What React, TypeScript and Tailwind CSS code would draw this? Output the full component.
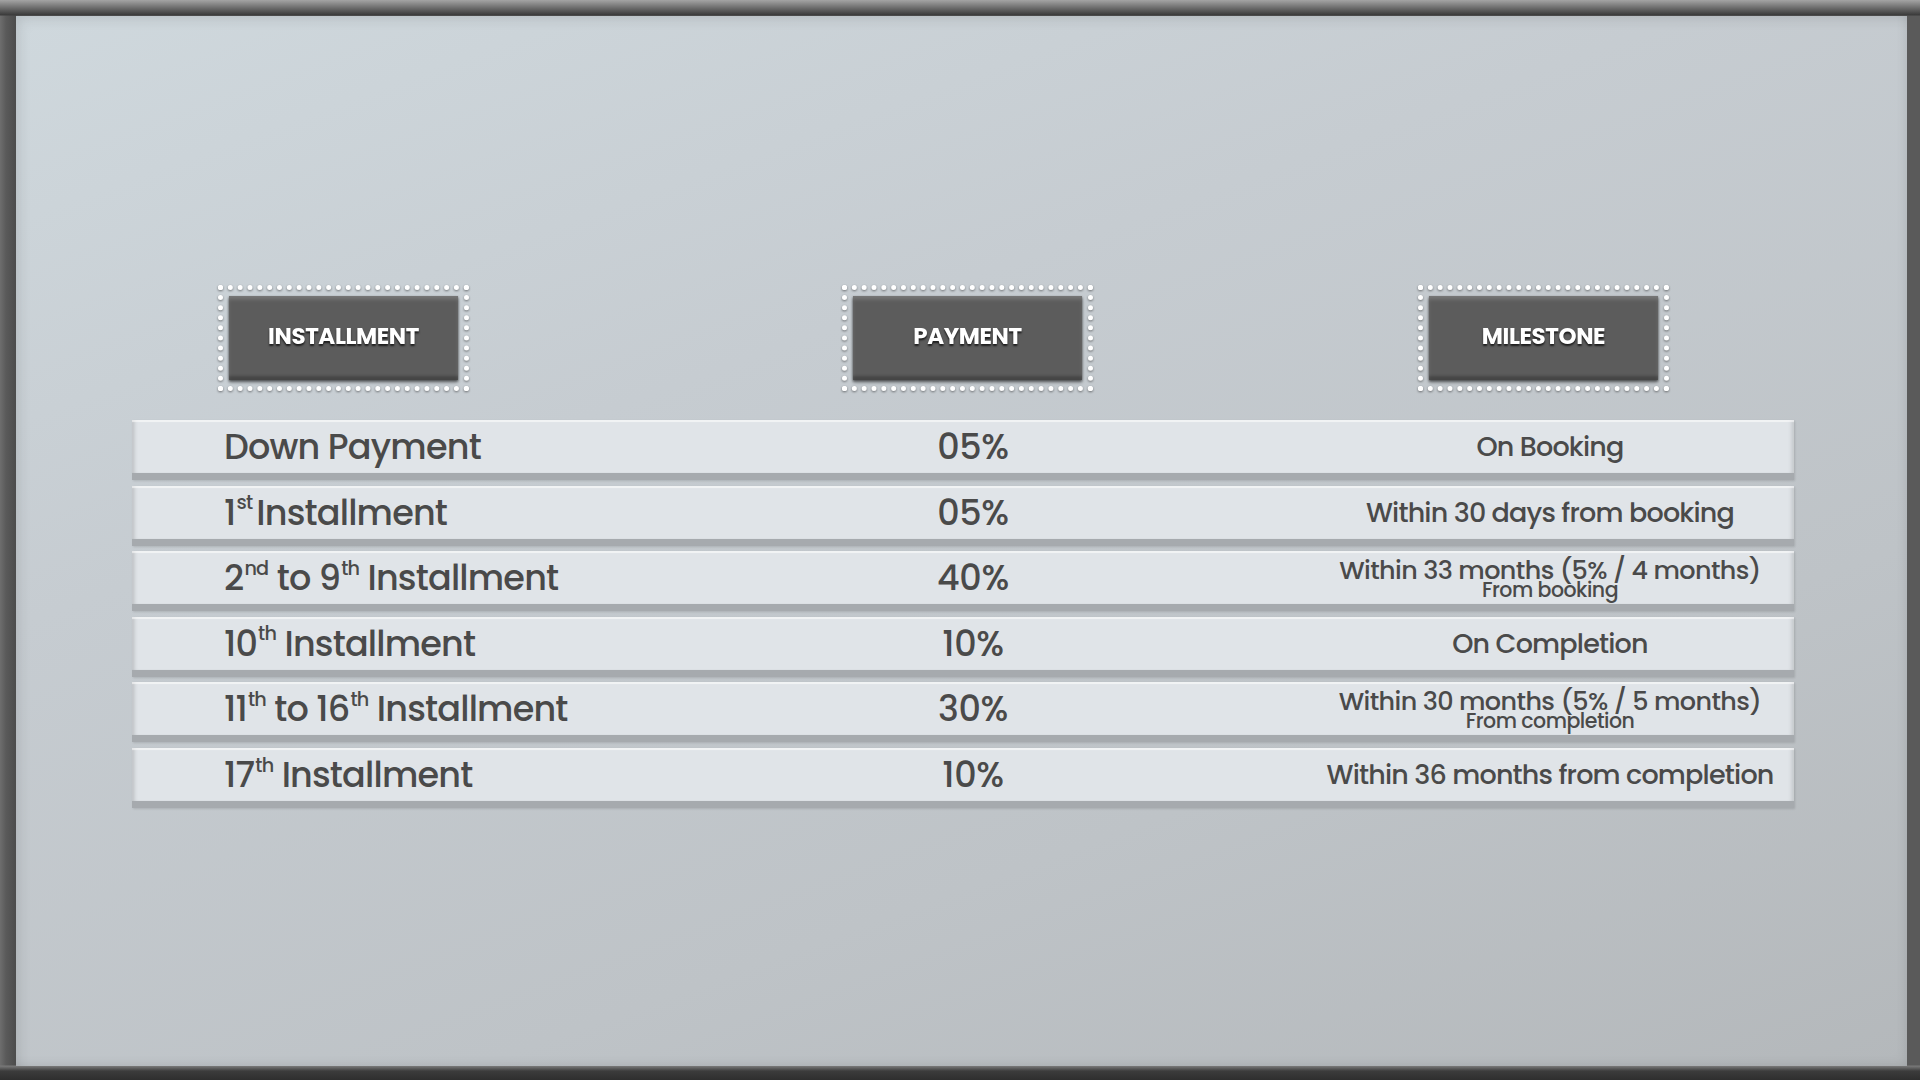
import React from "react";

const FONT = { fontFamily: '"Poppins", "Inter", "Noto Sans", sans-serif' };

function Sup({ children }: { children: React.ReactNode }) {
  return <sup className="text-[0.55em] relative top-[-0.14em] align-super ml-[1px]">{children}</sup>;
}

function HeaderBox({ label }: { label: string }) {
  return (
    <div className="w-[251px] h-[106px] border-[5px] border-dotted border-white p-[6px] [filter:drop-shadow(0_1.5px_1px_rgba(0,0,0,0.45))]">
      <div className="w-full h-full bg-[#5c5c5c] flex items-center justify-center pb-[4px] shadow-[inset_0_4px_4px_-1px_rgba(255,255,255,0.18),inset_0_-6px_3px_-2px_rgba(0,0,0,0.25),0_2px_3px_rgba(0,0,0,0.35)]">
        <span className="text-white text-[23px] font-bold tracking-[-0.4px] [text-shadow:0_2px_2px_rgba(0,0,0,0.7)]">
          {label}
        </span>
      </div>
    </div>
  );
}

type Row = { a: React.ReactNode; b: string; c: React.ReactNode };

function Two({ top, bottom }: { top: string; bottom: string }) {
  return (
    <div className="flex flex-col items-center leading-none pt-[2px]">
      <span className="text-[25.5px] leading-[22px] tracking-[-0.6px]">{top}</span>
      <span className="text-[20.5px] leading-[18px] tracking-[-0.5px]">{bottom}</span>
    </div>
  );
}

const rows: Row[] = [
  { a: <>Down Payment</>, b: "05%", c: <span className="text-[27px]">On Booking</span> },
  { a: <>1<Sup>st</Sup><span className="ml-[4px]">Installment</span></>, b: "05%", c: <span className="text-[27px]">Within 30 days from booking</span> },
  {
    a: <>2<Sup>nd</Sup> to 9<Sup>th</Sup> Installment</>,
    b: "40%",
    c: <Two top="Within 33 months (5% / 4 months)" bottom="From booking" />,
  },
  { a: <>10<Sup>th</Sup> Installment</>, b: "10%", c: <span className="text-[27px]">On Completion</span> },
  {
    a: <>11<Sup>th</Sup> to 16<Sup>th</Sup> Installment</>,
    b: "30%",
    c: <Two top="Within 30 months (5% / 5 months)" bottom="From completion" />,
  },
  { a: <>17<Sup>th</Sup> Installment</>, b: "10%", c: <span className="text-[27px]">Within 36 months from completion</span> },
];

export default function App() {
  return (
    <div
      className="w-[1920px] h-[1080px] overflow-hidden bg-[#555] pt-[16px] pl-[16px] pr-[13px] pb-[14px] bg-[linear-gradient(to_bottom,#a4a4a4_0px,#3a3a3a_15px,transparent_16px),linear-gradient(to_top,#2e2e2e_0px,#3c3c3c_9px,#7a7a7a_14px,transparent_15px),linear-gradient(to_right,#6e6e6e_0px,#5a5a5a_6px,#4c4c4c_16px,#5a5a5a_17px)]"
      style={FONT}
    >
      <div className="w-full h-full relative bg-[linear-gradient(160deg,#cfd8dd_0%,#c6ccd1_35%,#bec3c7_70%,#b4b8bb_100%)] shadow-[inset_8px_8px_14px_-6px_rgba(0,0,0,0.12),inset_-6px_-6px_12px_-6px_rgba(0,0,0,0.12)]">
        <div className="pt-[269px] pl-[116px] w-[1662px] box-content">
          <div className="flex">
            <div className="ml-[86px]">
              <HeaderBox label="INSTALLMENT" />
            </div>
            <div className="ml-[373px]">
              <HeaderBox label="PAYMENT" />
            </div>
            <div className="ml-[325px]">
              <HeaderBox label="MILESTONE" />
            </div>
          </div>

          <div className="mt-[29px] flex flex-col gap-[5.6px]">
            {rows.map((r, i) => (
              <div
                key={i}
                className="h-[60px] bg-[#e0e4e8] border-b-[7px] border-b-[#a6aaae] grid grid-cols-[641px_400px_1fr] items-center text-[#4a4a4a] shadow-[inset_0_2px_1px_rgba(255,255,255,0.6),inset_5px_0_4px_-3px_rgba(0,0,0,0.18),inset_-5px_0_4px_-3px_rgba(0,0,0,0.15),1px_1px_2px_rgba(0,0,0,0.12)]"
              >
                <div className="pl-[92px] text-[35px] font-medium tracking-[-0.8px] whitespace-nowrap leading-none">
                  {r.a}
                </div>
                <div className="text-center text-[35px] font-medium tracking-[-0.3px] leading-none">{r.b}</div>
                <div className="pl-[133px] flex justify-center whitespace-nowrap font-medium tracking-[-0.8px] leading-none">
                  {r.c}
                </div>
              </div>
            ))}
          </div>
        </div>
      </div>
    </div>
  );
}
